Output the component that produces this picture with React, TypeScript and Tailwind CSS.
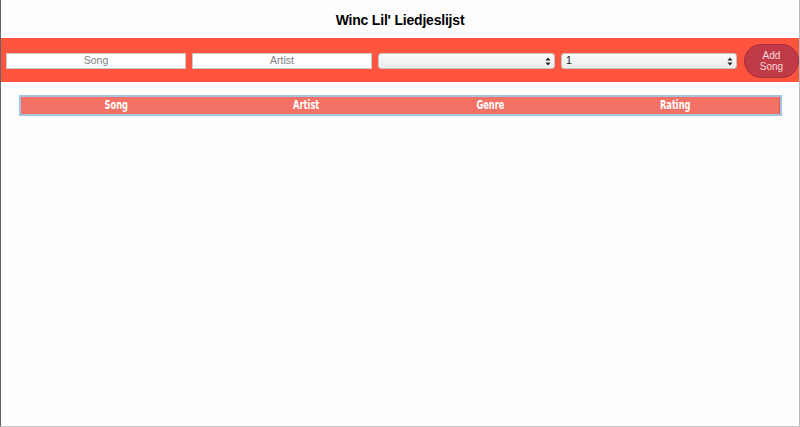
import React from "react";

const Arrows = () => (
  <svg width="6" height="9" viewBox="0 0 6 9" className="shrink-0">
    <path d="M3 0.5 L5.5 3.5 H0.5 Z" fill="#222" />
    <path d="M3 8.5 L5.5 5.5 H0.5 Z" fill="#222" />
  </svg>
);

const Head = ({ children }: { children: React.ReactNode }) => (
  <span className="inline-block scale-x-[0.72] origin-center">{children}</span>
);

export default function App() {
  return (
    <div
      className="w-[800px] h-[427px] bg-[#fefefe] border-l border-l-[#666] border-r border-r-[#bbb] border-b border-b-[#c8c8c8] flex flex-col overflow-hidden"
      style={{ fontFamily: '"Liberation Sans", Arial, sans-serif' }}
    >
      <h1 className="h-[38px] flex items-center justify-center text-[14px] font-bold text-black pt-[3px] tracking-[-0.2px]">
        Winc Lil' Liedjeslijst
      </h1>
      <div className="h-[44px] bg-[#ff543d] flex items-center pl-[5px] pt-[2px] gap-[6px]">
        <div className="w-[181px] h-[16px] bg-white border border-[#c9c9c9] flex items-center justify-center text-[10.5px] text-[#808080]">
          Song
        </div>
        <div className="w-[181px] h-[16px] bg-white border border-[#c9c9c9] flex items-center justify-center text-[10.5px] text-[#808080]">
          Artist
        </div>
        <div className="w-[178px] h-[16px] bg-gradient-to-b from-[#fafafa] to-[#ececec] border border-[#c4c4c4] rounded-[3px] flex items-center justify-end pr-[3px]">
          <Arrows />
        </div>
        <div className="w-[177px] h-[16px] bg-gradient-to-b from-[#fafafa] to-[#ececec] border border-[#c4c4c4] rounded-[3px] flex items-center justify-between pl-[4px] pr-[3px] text-[10.5px] text-[#111]">
          <span>1</span>
          <Arrows />
        </div>
        <div className="ml-[1px] w-[55px] h-[34px] shrink-0 rounded-full bg-[#c03a47] border border-[#a82e3c] flex flex-col items-center justify-center text-[10px] leading-[11px] text-[#f6dadc]">
          <span>Add</span>
          <span>Song</span>
        </div>
      </div>
      <div className="pt-[13px] pl-[18px]">
        <div
          className="w-[763px] h-[21px] border-2 border-[#a7c3e4] bg-[#f47265] grid grid-cols-[190px_190px_178px_1fr] items-center text-white text-[11.5px] font-bold"
          style={{ fontFamily: '"DejaVu Sans", "Liberation Sans", sans-serif' }}
        >
          <div className="text-center"><Head>Song</Head></div>
          <div className="text-center"><Head>Artist</Head></div>
          <div className="text-center"><Head>Genre</Head></div>
          <div className="text-center pr-[8px] h-full border-r border-r-[#d8584c] flex items-center justify-center"><Head>Rating</Head></div>
        </div>
      </div>
    </div>
  );
}
